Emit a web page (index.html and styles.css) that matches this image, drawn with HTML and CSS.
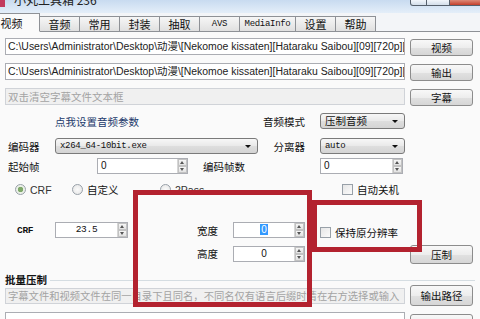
FILE: index.html
```html
<!DOCTYPE html>
<html lang="zh-CN">
<head>
    <meta charset="UTF-8">
    <title>小丸工具箱 236</title>
    <link rel="stylesheet" href="styles.css">
</head>
<body>
    <div class="window">
        <div class="titlebar">
            <span class="app-icon"></span>
            <span class="title">小丸工具箱 236</span>
            <div class="win-buttons">
                <span class="wb wb-min"></span><span class="wb wb-max"></span><span class="wb wb-close"></span>
            </div>
        </div>

        <div class="tabs">
            <div class="tab active">视频</div>
            <div class="tab">音频</div>
            <div class="tab">常用</div>
            <div class="tab">封装</div>
            <div class="tab">抽取</div>
            <div class="tab mono">AVS</div>
            <div class="tab mono wide">MediaInfo</div>
            <div class="tab">设置</div>
            <div class="tab">帮助</div>
        </div>

        <div class="panel">
            <div class="file-row">
                <div class="textbox path">C:\Users\Administrator\Desktop\动漫\[Nekomoe kissaten][Hataraku Saibou][09][720p][CHS].mp4</div>
                <button class="btn">视频</button>
            </div>
            <div class="file-row">
                <div class="textbox path">C:\Users\Administrator\Desktop\动漫\[Nekomoe kissaten][Hataraku Saibou][09][720p][CHS]_v.mp4</div>
                <button class="btn">输出</button>
            </div>
            <div class="file-row">
                <div class="textbox disabled">双击清空字幕文件文本框</div>
                <button class="btn">字幕</button>
            </div>

            <!-- 编码参数 -->
            <div class="opt-row row-audio">
                <span></span>
                <span class="link">点我设置音频参数</span>
                <span class="label right">音频模式</span>
                <div class="combo">压制音频</div>
            </div>
            <div class="opt-row row-encoder">
                <span class="label">编码器</span>
                <div class="combo mono">x264_64-10bit.exe</div>
                <span class="label right">分离器</span>
                <div class="combo mono">auto</div>
            </div>
            <div class="opt-row row-frames">
                <span class="label">起始帧</span>
                <div class="frame-cell">
                    <div class="spin start-spin">
                        <span class="spin-value left">0</span>
                        <span class="spin-btns"><i class="up"></i><i class="down"></i></span>
                    </div>
                    <span class="label frames-label">编码帧数</span>
                </div>
                <span></span>
                <div class="spin count-spin">
                    <span class="spin-value left">0</span>
                    <span class="spin-btns"><i class="up"></i><i class="down"></i></span>
                </div>
            </div>

            <div class="mode-row">
                <span class="choice crf"><span class="radio checked"></span><span class="choice-text latin">CRF</span></span>
                <span class="choice custom"><span class="radio"></span><span class="choice-text">自定义</span></span>
                <span class="choice twopass"><span class="radio"></span><span class="choice-text latin">2Pass</span></span>
                <span class="choice"><span class="checkbox"></span><span class="choice-text">自动关机</span></span>
            </div>

            <div class="size-grid">
                <span class="label mono crf-label">CRF</span>
                <div class="spin">
                    <span class="spin-value mono">23.5</span>
                    <span class="spin-btns"><i class="up"></i><i class="down"></i></span>
                </div>
                <span class="label right">宽度</span>
                <div class="spin">
                    <span class="spin-value"><span class="selected">0</span></span>
                    <span class="spin-btns"><i class="up"></i><i class="down"></i></span>
                </div>
                <span class="choice keep"><span class="checkbox"></span><span class="choice-text">保持原分辨率</span></span>
                <span></span>

                <span></span>
                <span></span>
                <span class="label right">高度</span>
                <div class="spin">
                    <span class="spin-value">0</span>
                    <span class="spin-btns"><i class="up"></i><i class="down"></i></span>
                </div>
                <span></span>
                <button class="btn encode-btn">压制</button>
            </div>

            <!-- 批量压制 -->
            <div class="group-title"><span>批量压制</span><span class="group-line"></span></div>
            <div class="batch-row">
                <div class="textbox disabled hint">字幕文件和视频文件在同一目录下且同名，不同名仅有语言后缀时请在右方选择或输入</div>
                <button class="btn tall">输出路径</button>
            </div>
            <div class="batch-row last">
                <div class="textbox list"></div>
                <button class="btn tall">添加</button>
            </div>
        </div>

        <!-- 红色标注框 -->
        <div class="mark mark-size"></div>
        <div class="mark mark-keep"></div>
    </div>
</body>
</html>
```

FILE: styles.css
```css
* {
    box-sizing: border-box;
}

body {
    margin: 0;
    font-family: "Noto Sans CJK SC", sans-serif;
    font-size: 10.5px;
    color: #111;
    background: #fff;
}

.window {
    position: relative;
    width: 480px;
    height: 319px;
    overflow: hidden;
    background: #fafafa;
}

.mono {
    font-family: "Liberation Mono", monospace;
    font-size: 9px;
    letter-spacing: -0.3px;
}

/* 标题栏 */
.titlebar {
    height: 13px;
    display: flex;
    align-items: flex-start;
    background: linear-gradient(#c8dbf0, #e4eef9);
}

.app-icon {
    width: 5px;
    height: 7px;
    background: #c23a5e;
}

.title {
    margin-left: 9px;
    margin-top: -7px;
    font-size: 12px;
    line-height: 14px;
    color: #222;
}

.win-buttons {
    margin-left: auto;
    margin-right: -2px;
    display: flex;
}

.wb {
    height: 6px;
    border: 1px solid #56606c;
    border-top: none;
    background: linear-gradient(#f2f6fb, #d3deea);
}

.wb-min {
    width: 17px;
    border-radius: 0 0 0 3px;
}

.wb-max {
    width: 23px;
    border-left: none;
}

.wb-close {
    width: 32px;
    border-left: none;
    background: linear-gradient(#dd8a78, #c4402c);
}

/* 选项卡 */
.tabs {
    height: 19px;
    display: flex;
    align-items: flex-end;
    background: #f3f5f8;
    border-bottom: 1px solid #8e9196;
}

.tab {
    width: 40px;
    height: 16px;
    margin-bottom: -1px;
    line-height: 15px;
    text-align: center;
    font-size: 11px;
    border: 1px solid #8e9196;
    border-left: none;
    background: linear-gradient(#f6f6f6, #e0e0e0);
}

.tab.mono {
    font-size: 9px;
}

.tab.wide {
    width: 56px;
}

.tab.active {
    width: 56px;
    height: 19px;
    margin-left: -16px;
    line-height: 19px;
    background: #fafafa;
    border-bottom: 1px solid #fafafa;
}

/* 面板 */
.panel {
    padding: 6px 0 0 5px;
}

.file-row {
    display: flex;
    align-items: flex-start;
    height: 17px;
    margin-bottom: 8px;
}

.textbox {
    width: 400px;
    height: 17px;
    padding: 0 2px;
    border: 1px solid #abadb3;
    background: #fff;
    line-height: 15px;
    white-space: nowrap;
    overflow: hidden;
}

.textbox.path {
    font-family: "Liberation Sans", "Noto Sans CJK SC", sans-serif;
    font-size: 10.45px;
    color: #222;
}

.textbox.disabled {
    background: #f0f0f0;
    border-color: #d0d3d8;
    color: #a3a3a3;
}

.btn {
    width: 63px;
    height: 17px;
    margin: 1px 0 0 5px;
    padding: 0;
    border: 1px solid #8c8c8c;
    border-radius: 3px;
    background: linear-gradient(#f8f8f8, #ededed 50%, #e1e1e1 51%, #d6d6d6);
    font-family: inherit;
    font-size: 10.5px;
    color: #111;
}

/* 参数区 */
.opt-row {
    display: grid;
    grid-template-columns: 47px 203px 62px 85px;
    align-items: center;
    height: 16px;
    margin-left: 3px;
}

.row-audio {
    margin-top: 7px;
}

.row-encoder {
    margin-top: 9px;
}

.row-frames {
    margin-top: 4px;
}

.label.right {
    text-align: right;
    padding-right: 15px;
}

.link {
    color: #22396a;
}

.combo {
    position: relative;
    height: 16px;
    padding-left: 4px;
    line-height: 14px;
    border: 1px solid #7a7a7a;
    border-radius: 3px;
    background: linear-gradient(#f7f7f7, #e9e9e9 50%, #dedede 51%, #d4d4d4);
}

.combo::after {
    content: "";
    position: absolute;
    right: 6px;
    top: 6px;
    border: 3px solid transparent;
    border-top: 3px solid #111;
    border-bottom: none;
    width: 0;
    height: 0;
}

.frame-cell {
    display: flex;
    align-items: center;
}

.spin {
    display: flex;
    height: 16px;
    border: 1px solid #abadb3;
    background: #fff;
}

.start-spin {
    width: 91px;
    margin-left: 42px;
}

.count-spin {
    width: 83px;
}

.frames-label {
    margin-left: 15px;
}

.spin-value {
    flex: 1;
    text-align: center;
    line-height: 14px;
    font-family: "Liberation Sans", sans-serif;
    font-size: 10px;
}

.spin-value.left {
    text-align: left;
    padding-left: 3px;
}

.spin-value.mono {
    font-family: "Liberation Mono", monospace;
    font-size: 9.5px;
}

.selected {
    background: #3399ff;
    color: #fff;
    padding: 0 1px;
}

.spin-btns {
    width: 10px;
    display: flex;
    flex-direction: column;
    border-left: 1px solid #d6d6d6;
}

.spin-btns i {
    position: relative;
    flex: 1;
    background: linear-gradient(#f6f6f6, #e2e2e2);
    border: 1px solid #c2c2c2;
}

.spin-btns i::after {
    content: "";
    position: absolute;
    left: 1px;
    top: 1px;
    width: 0;
    height: 0;
    border: 2.5px solid transparent;
}

.spin-btns .up::after {
    border-top: none;
    border-bottom: 3px solid #555;
}

.spin-btns .down::after {
    border-bottom: none;
    border-top: 3px solid #555;
}

/* 模式选择 */
.mode-row {
    display: flex;
    align-items: center;
    height: 13px;
    margin: 9px 0 0 10px;
}

.choice {
    display: flex;
    align-items: center;
}

.choice.crf {
    width: 57px;
}

.choice.custom {
    width: 88px;
}

.choice.twopass {
    width: 182px;
}

.radio {
    width: 11px;
    height: 11px;
    border-radius: 50%;
    border: 1px solid #98a0a8;
    background: radial-gradient(#fafafa, #e4e4e4);
}

.radio.checked {
    background: radial-gradient(circle, #7fa86a 0 2.5px, #e8efe4 3px, #f3f3f3);
}

.checkbox {
    width: 11px;
    height: 11px;
    border: 1px solid #98a0a8;
    background: linear-gradient(135deg, #e6e6e6, #fbfbfb);
}

.choice-text {
    margin-left: 4px;
}

.choice-text.latin {
    font-family: "Liberation Sans", sans-serif;
    font-size: 10.5px;
    color: #333;
}

/* 尺寸 */
.size-grid {
    display: grid;
    grid-template-columns: 47px 73px 105px 72px 105px 63px;
    grid-template-rows: 16px 17px;
    row-gap: 7px;
    align-items: center;
    margin: 26px 0 0 3px;
}

.crf-label {
    padding-left: 9px;
    font-size: 9.5px;
    font-weight: bold;
}

.choice.keep {
    padding-left: 15px;
    margin-top: 4px;
}

.btn.encode-btn {
    height: 19px;
    margin: 0;
    align-self: start;
}

/* 批量压制 */
.group-title {
    display: flex;
    align-items: center;
    height: 11px;
    margin-top: 12px;
    line-height: 11px;
    font-weight: bold;
}

.group-line {
    flex: 1;
    margin: 1px 5px 0 3px;
    border-top: 1px solid #d5dde2;
}

.batch-row {
    display: flex;
    align-items: center;
    height: 21px;
}

.textbox.hint {
    height: 16px;
    line-height: 14px;
    font-size: 10.3px;
}

.btn.tall {
    height: 21px;
    margin-top: 0;
}

.batch-row.last {
    align-items: flex-start;
    margin-top: 6px;
}

.textbox.list {
    height: 24px;
}

.batch-row.last .btn {
    margin-top: 2px;
}

/* 红色标注框 */
.mark {
    position: absolute;
    border: 5px solid #b3222f;
}

.mark-size {
    left: 133px;
    top: 190px;
    width: 179px;
    height: 117px;
}

.mark-keep {
    left: 312px;
    top: 200px;
    width: 110px;
    height: 52px;
}
```
